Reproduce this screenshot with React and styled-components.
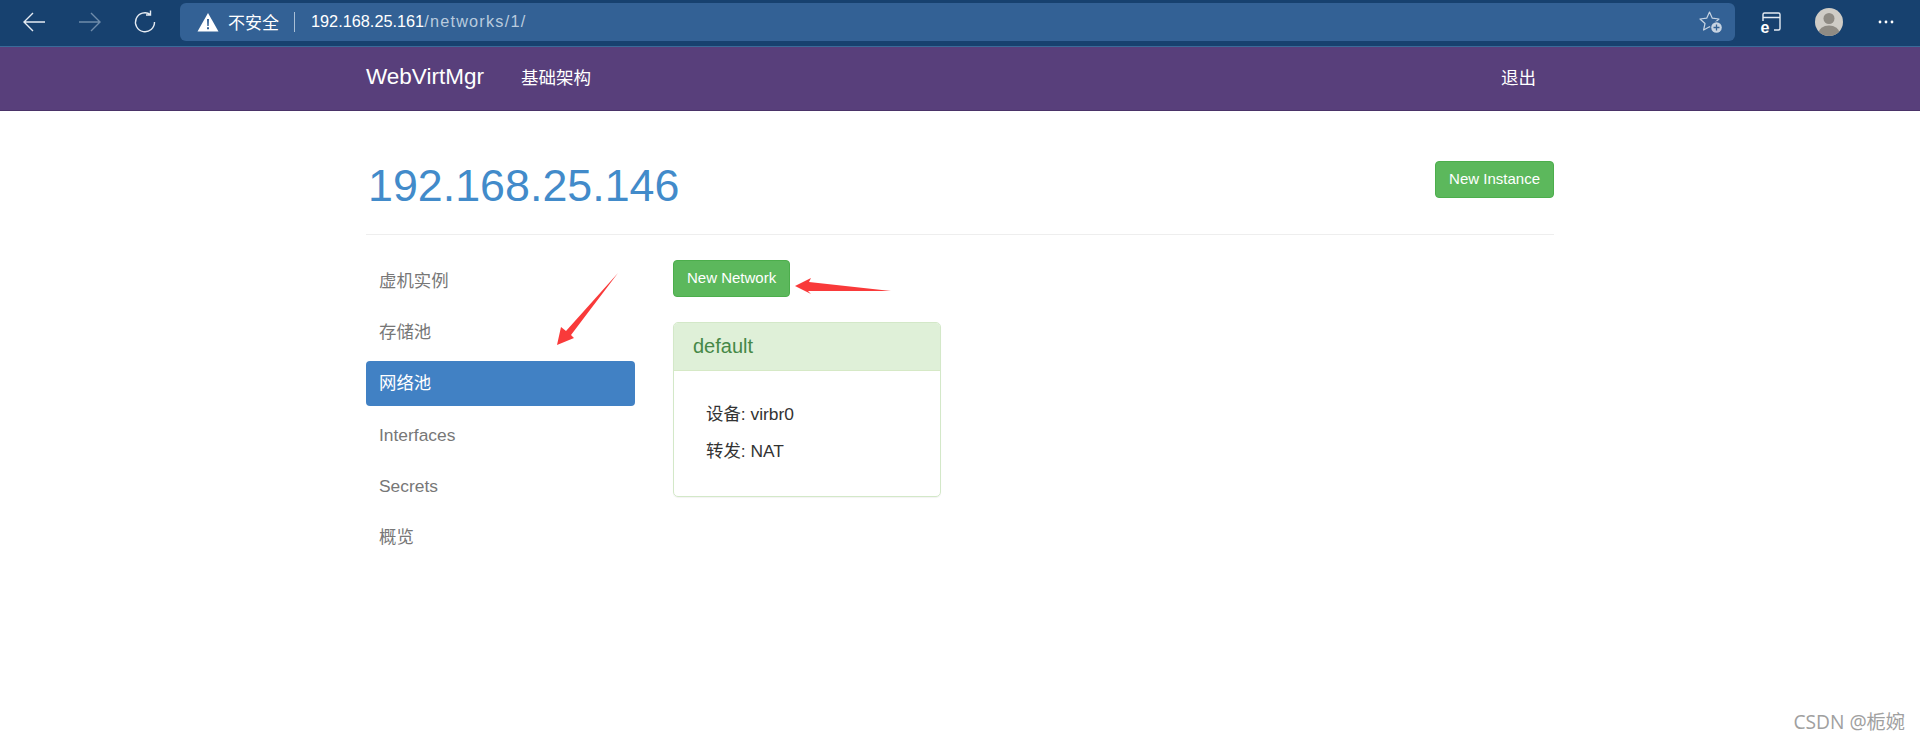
import React from 'react';
import styled, { createGlobalStyle } from 'styled-components';

const FONT = '"Liberation Sans", "Noto Sans CJK SC", sans-serif';

const GlobalStyle = createGlobalStyle`
    html, body {
        margin: 0;
        padding: 0;
        background: #fff;
        overflow: hidden;
    }
    * {
        box-sizing: border-box;
    }
`;

const Page = styled.div`
    position: relative;
    width: 1920px;
    height: 741px;
    overflow: hidden;
    font-family: ${FONT};
`;

// browser chrome
const BrowserBar = styled.div`
    display: flex;
    align-items: center;
    height: 47px;
    padding: 0 0 3px 22px;
    background: #17416f;
    border-bottom: 1px solid #3a6a99;
`;
const ToolIcon = styled.svg`
    flex: none;
    width: 24px;
    height: 24px;
    margin-left: ${props => props.$before || 0}px;
    margin-right: ${props => props.$gap}px;
    fill: none;
    stroke: ${props => props.$dim ? '#6f8cab' : '#e6ecf3'};
    stroke-width: 1.4;
`;
const UrlBar = styled.div`
    flex: none;
    display: flex;
    align-items: center;
    width: 1555px;
    height: 38px;
    padding: 0 12px 0 17px;
    background: #336195;
    border-radius: 6px;
    font-size: 16.3px;
    color: #fff;
`;
const Insecure = styled.span`
    margin-left: 9px;
    font-size: 17px;
`;
const UrlDivider = styled.span`
    width: 1px;
    height: 20px;
    margin: 0 16px 0 15px;
    background: #a9bfd6;
`;
const UrlPath = styled.span`
    color: #b9cbde;
    letter-spacing: 1.2px;
`;
const StarWrap = styled.svg`
    width: 24px;
    height: 24px;
    margin-left: auto;
`;
const Avatar = styled.svg`
    flex: none;
    width: 28px;
    height: 28px;
    margin: 0 35px 0 0;
    border-radius: 50%;
`;
const Dots = styled.svg`
    flex: none;
    width: 16px;
    height: 4px;
`;

// purple navbar
const Navbar = styled.div`
    height: 64px;
    background: #583f7b;
    border-bottom: 1px solid #4a3368;
`;
const NavInner = styled.div`
    display: flex;
    align-items: center;
    width: 1188px;
    height: 100%;
    margin: 0 auto;
    padding: 0 18px 3px 0;
    color: #fff;
`;
const Brand = styled.span`
    font-size: 22.5px;
    margin-right: 37px;
`;
const NavLink = styled.span`
    font-size: 17.5px;
    margin-bottom: 2px;
    margin-left: ${props => props.$right ? 'auto' : '0'};
`;

// content
const Container = styled.div`
    width: 1188px;
    margin: 0 auto;
`;
const PageHeader = styled.div`
    display: flex;
    justify-content: space-between;
    align-items: flex-start;
    height: 124px;
    padding-top: 50px;
    border-bottom: 1px solid #eeeeee;
`;
const Title = styled.h1`
    margin: 0 0 0 2px;
    font-size: 44.8px;
    line-height: 49px;
    font-weight: 400;
    color: #428bca;
`;
const GreenButton = styled.button`
    display: block;
    height: 37px;
    padding: 0 13px 2px;
    border: 1px solid #4cae4c;
    border-radius: 4px;
    background: #5cb85c;
    color: #fff;
    font-family: ${FONT};
    font-size: 15px;
`;
const Columns = styled.div`
    display: flex;
    padding-top: 24px;
`;
const SideNav = styled.ul`
    flex: none;
    display: flex;
    flex-direction: column;
    gap: 6.2px;
    width: 269px;
    margin: 0 38px 0 0;
    padding: 0;
    list-style: none;
`;
const SideItem = styled.li`
    height: 45px;
    padding-left: 13px;
    line-height: 45px;
    font-size: 17.4px;
    border-radius: 4px;
    color: ${props => props.$active ? '#fff' : '#777777'};
    background: ${props => props.$active ? '#4181c4' : 'transparent'};
`;
const Main = styled.div`
    padding-top: 1px;
`;
const Panel = styled.div`
    width: 268px;
    height: 175px;
    margin-top: 25px;
    border: 1px solid #d3e8c8;
    border-radius: 5px;
    overflow: hidden;
    box-shadow: 0 1px 1px rgba(0, 0, 0, 0.05);
`;
const PanelHeading = styled.div`
    height: 48px;
    padding-left: 19px;
    line-height: 47px;
    font-size: 20px;
    color: #468847;
    background: #dff0d8;
    border-bottom: 1px solid #d6e9c6;
`;
const PanelBody = styled.div`
    padding: 25px 0 0 32px;
`;
const PanelLine = styled.p`
    margin: 0;
    font-size: 17.4px;
    line-height: 37px;
    color: #333333;
`;

// annotations drawn on top of the screenshot
const Annotation = styled.svg`
    position: absolute;
    left: 0;
    top: 0;
    width: 1920px;
    height: 741px;
    pointer-events: none;
`;
const Watermark = styled.span`
    position: absolute;
    right: 15px;
    top: 710px;
    font-family: "Open Sans", "Noto Sans CJK SC", sans-serif;
    font-size: 19.2px;
    line-height: 24px;
    color: #a0a0a0;
`;

const SIDE_ITEMS = ['虚机实例', '存储池', '网络池', 'Interfaces', 'Secrets', '概览'];

export default function App() {
    return (
        <Page>
            <GlobalStyle />
            <BrowserBar>
                <ToolIcon $gap={32} viewBox="0 0 24 24"><path d="M23 12H2M11 3l-9 9 9 9" /></ToolIcon>
                <ToolIcon $gap={31} $dim viewBox="0 0 24 24"><path d="M1 12h21M13 3l9 9-9 9" /></ToolIcon>
                <ToolIcon $gap={23} viewBox="0 0 24 24"><path d="M17.5 4.5A9.5 9.5 0 1 0 21.5 12M17.5 0.5v4.5h-4.5" /></ToolIcon>
                <UrlBar>
                    <svg width="22" height="20" viewBox="0 0 22 20">
                        <path d="M11 1 21.5 19.5H.5z" fill="#fff" />
                        <path d="M10 7h2l-.3 7h-1.400zM10 15.300h2v2h-2z" fill="#336195" />
                    </svg>
                    <Insecure>不安全</Insecure>
                    <UrlDivider />
                    <span>192.168.25.161</span><UrlPath>/networks/1/</UrlPath>
                    <StarWrap viewBox="0 0 24 24">
                        <path d="M10.500 2 13.300 8.200 20 9 15 13.500 16.400 20 10.500 16.700 4.600 20 6 13.500 1 9 7.700 8.200z" fill="none" stroke="#c6d3e2" strokeWidth="1.200" strokeLinejoin="round" />
                        <circle cx="17.500" cy="17.500" r="6.300" fill="#336195" />
                        <circle cx="17.500" cy="17.500" r="5.300" fill="#c6d3e2" />
                        <path d="M17.500 14.500v6M14.500 17.500h6" stroke="#336195" strokeWidth="1.300" />
                    </StarWrap>
                </UrlBar>
                <ToolIcon $before={24} $gap={32} viewBox="0 0 24 24">
                    <path d="M4 11V4.500Q4 3 5.500 3h14Q21 3 21 4.500v14q0 1.500-1.500 1.500H15M4 7.500h17" />
                    <text x="1.500" y="22.500" fontFamily={FONT} fontSize="16" fontWeight="700" fill="#fff" stroke="none">e</text>
                </ToolIcon>
                <Avatar viewBox="0 0 28 28">
                    <rect width="28" height="28" fill="#cfccc6" />
                    <circle cx="14" cy="10.500" r="5.500" fill="#8f8b84" />
                    <ellipse cx="14" cy="25" rx="10.500" ry="7.500" fill="#8f8b84" />
                </Avatar>
                <Dots viewBox="0 0 16 4">
                    <circle cx="2" cy="2" r="1.400" fill="#fff" />
                    <circle cx="8" cy="2" r="1.400" fill="#fff" />
                    <circle cx="14" cy="2" r="1.400" fill="#fff" />
                </Dots>
            </BrowserBar>

            <Navbar>
                <NavInner>
                    <Brand>WebVirtMgr</Brand>
                    <NavLink>基础架构</NavLink>
                    <NavLink $right>退出</NavLink>
                </NavInner>
            </Navbar>

            <Container>
                <PageHeader>
                    <Title>192.168.25.146</Title>
                    <GreenButton>New Instance</GreenButton>
                </PageHeader>
                <Columns>
                    <SideNav>
                        {SIDE_ITEMS.map(item => (
                            <SideItem key={item} $active={item === '网络池'}>{item}</SideItem>
                        ))}
                    </SideNav>
                    <Main>
                        <GreenButton>New Network</GreenButton>
                        <Panel>
                            <PanelHeading>default</PanelHeading>
                            <PanelBody>
                                <PanelLine>设备: virbr0</PanelLine>
                                <PanelLine>转发: NAT</PanelLine>
                            </PanelBody>
                        </Panel>
                    </Main>
                </Columns>
            </Container>

            <Annotation viewBox="0 0 1920 741">
                <polygon points="557,345 561,327 566,331 618,273 571,335 574,338" fill="#f93a3a" />
                <polygon points="795,286 811,278 809,282 891,291 808,291 811,294" fill="#f93a3a" />
            </Annotation>
            <Watermark>CSDN @栀婉</Watermark>
        </Page>
    );
}
